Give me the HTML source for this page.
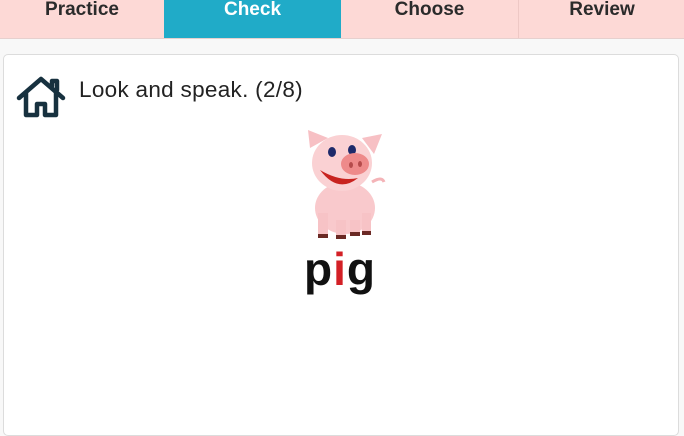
<!DOCTYPE html>
<html><head><style>
body{margin:0;width:684px;height:421px;overflow:hidden;background:#f8f8f8;font-family:"Liberation Sans",sans-serif;}
.tabs{position:absolute;top:0;left:0;width:684px;height:38px;background:#fdd9d6;border-bottom:1px solid #e6d0ce;}
.tab{position:absolute;top:0;height:38px;line-height:20px;text-align:center;font-weight:bold;font-size:19px;color:#2b2b2b;}
.card{position:absolute;left:3px;top:54px;width:674px;height:380px;background:#fff;border:1px solid #dcdcdc;border-radius:5px;}
.title{position:absolute;left:79px;top:77px;font-size:22.5px;color:#222;letter-spacing:0.3px;}
.word{position:absolute;left:304px;top:242px;font-size:46px;font-weight:bold;color:#111;letter-spacing:1px;}
</style></head><body>
<div class="tabs">
<div class="tab" style="left:0;width:164px;">Practice</div>
<div class="tab" style="left:164px;width:177px;background:#20abc8;color:#fff;">Check</div>
<div class="tab" style="left:341px;width:177px;">Choose</div>
<div class="tab" style="left:518px;width:166px;border-left:1px solid #eec8c5;">Review</div>
</div>
<div class="card"></div>
<svg style="position:absolute;left:15px;top:76px" width="52" height="42" viewBox="0 0 52 42">
<path d="M4 22 L26 3 L48 22 M11 17 V39 H22 V28 H30 V39 H41 V17 M37 10 V5 H42 V14" fill="none" stroke="#17313f" stroke-width="4.5" stroke-linejoin="round" stroke-linecap="round"/>
</svg>
<div class="title">Look and speak. (2/8)</div>
<svg style="position:absolute;left:300px;top:128px" width="90" height="115" viewBox="0 0 90 115">
<ellipse cx="45" cy="80" rx="30" ry="26" fill="#f9c9cc"/>
<rect x="18" y="85" width="10" height="25" fill="#f7c3c6"/>
<rect x="36" y="92" width="10" height="18" fill="#f7c3c6"/>
<rect x="50" y="92" width="10" height="16" fill="#f7c3c6"/>
<rect x="62" y="85" width="9" height="22" fill="#f7c3c6"/>
<rect x="18" y="106" width="10" height="4" fill="#6b2a25"/><rect x="36" y="107" width="10" height="4" fill="#6b2a25"/>
<rect x="50" y="104" width="10" height="4" fill="#6b2a25"/><rect x="62" y="103" width="9" height="4" fill="#6b2a25"/>
<path d="M72 54 q10 -6 12 0" stroke="#f4b4b8" stroke-width="3" fill="none"/>
<ellipse cx="42" cy="35" rx="30" ry="28" fill="#fad1d3"/>
<path d="M10 20 L8 2 L28 10Z" fill="#f7c0c4"/><path d="M62 10 L82 6 L74 26Z" fill="#f7c0c4"/>
<ellipse cx="32" cy="24" rx="4" ry="5" fill="#1d2a6a"/><ellipse cx="52" cy="22" rx="4" ry="5" fill="#1d2a6a"/>
<path d="M20 42 q18 24 38 8 q-18 4 -38 -8z" fill="#c8231f"/>
<ellipse cx="55" cy="36" rx="14" ry="11" fill="#ee8a8a"/>
<ellipse cx="51" cy="37" rx="2" ry="3" fill="#b54b4b"/><ellipse cx="60" cy="36" rx="2" ry="3" fill="#b54b4b"/>
</svg>
<div class="word">p<span style="color:#d32026">i</span>g</div>
</body></html>
